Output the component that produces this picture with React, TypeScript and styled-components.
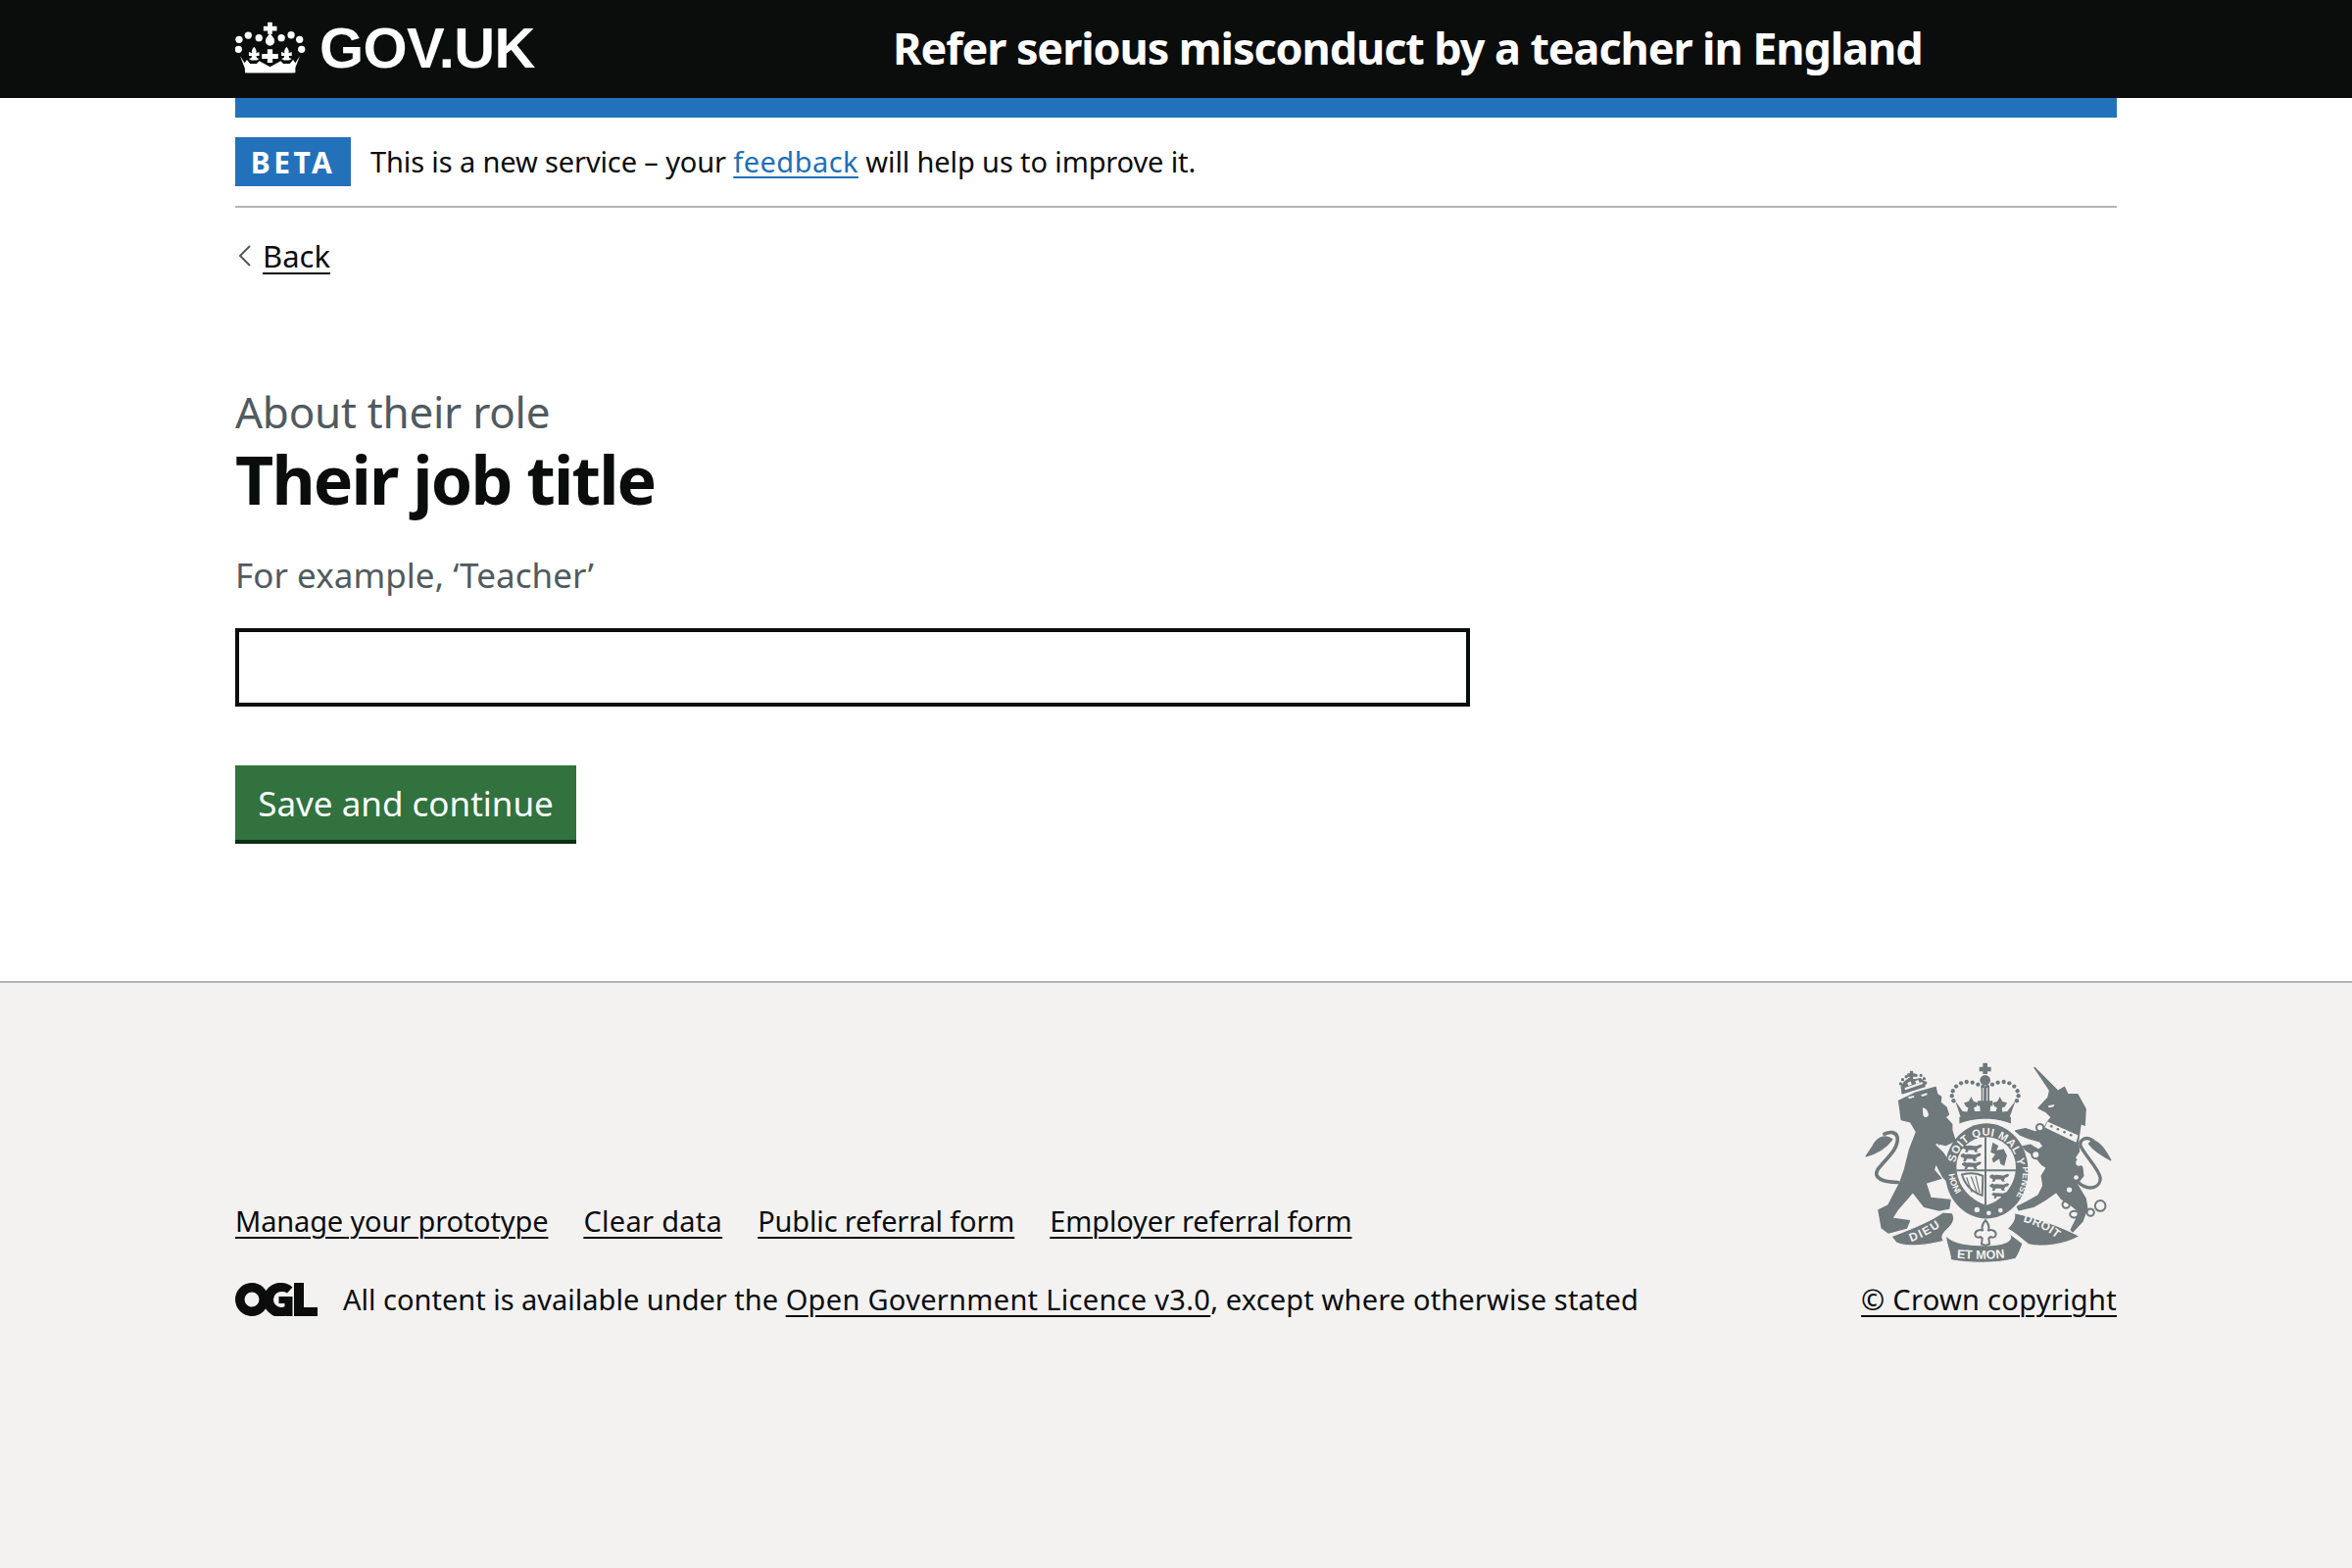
import React from "react";
import styled, { createGlobalStyle } from "styled-components";

const Global = createGlobalStyle`
  html, body { margin: 0; padding: 0; background: #fff; }
  body { font-family: "Noto Sans", "Open Sans", sans-serif; color: #0b0c0c; }
  * { box-sizing: border-box; }
`;

const Page = styled.div`
  min-height: 1600px;
  display: flex;
  flex-direction: column;
`;
const Header = styled.header`
  height: 100px;
  background: #0b0c0c;
  color: #fff;
  padding: 0 240px 3px;
  display: flex;
  align-items: center;
`;
const LogoBox = styled.div`
  width: 671px;
  display: flex;
  align-items: center;
  gap: 13px;
`;
const LogoText = styled.span`
  font-family: "Liberation Sans", Arial, sans-serif;
  font-weight: 700;
  font-size: 58px;
  letter-spacing: -0.6px;
  line-height: 94px;
`;
const ServiceName = styled.span`
  font-weight: 700;
  font-size: 45px;
  letter-spacing: -1.1px;
  white-space: nowrap;
`;
const Container = styled.div`
  margin: 0 240px;
`;
const BlueBar = styled.div`
  height: 20px;
  background: #2371bb;
`;
const Phase = styled.div`
  display: flex;
  align-items: center;
  gap: 20px;
  padding: 20px 0;
  border-bottom: 2px solid #b1b4b6;
`;
const Tag = styled.strong`
  width: 118px;
  height: 50px;
  background: #2371bb;
  color: #fff;
  font-size: 30px;
  font-weight: 700;
  letter-spacing: 3.4px;
  display: flex;
  align-items: center;
  justify-content: center;
`;
const Body = styled.span`
  font-size: 29px;
  line-height: 40px;
  letter-spacing: -0.12px;
`;
const InlineLink = styled.a`
  color: #1d70b8;
  letter-spacing: 0.45px;
  text-decoration: underline;
  text-decoration-thickness: 2px;
  text-underline-offset: 4px;
`;
const BackRow = styled.div`
  display: flex;
  align-items: center;
  gap: 12px;
  margin-top: 29px;
  padding-left: 3px;
  height: 40px;
  font-size: 31px;
`;
const BackLink = styled.a`
  color: #0b0c0c;
  text-decoration: underline;
  text-decoration-thickness: 2px;
  text-underline-offset: 5px;
`;
const Main = styled.main`
  padding-top: 115px;
  height: 720px;
  flex: none;
`;
const Caption = styled.div`
  color: #505a5f;
  font-size: 44px;
  line-height: 48px;
  letter-spacing: -0.25px;
`;
const Title = styled.h1`
  margin: 5px 0 0;
  font-size: 68px;
  font-weight: 700;
  line-height: 80px;
  letter-spacing: -1.85px;
`;
const Hint = styled.div`
  color: #505a5f;
  font-size: 35px;
  line-height: 40px;
  letter-spacing: 0.05px;
  margin-top: 38px;
`;
const Input = styled.input`
  display: block;
  width: 1260px;
  height: 80px;
  margin-top: 34px;
  border: 4px solid #0b0c0c;
  border-radius: 0;
  background: #fff;
  outline: none;
`;
const Button = styled.button`
  display: block;
  width: 348px;
  height: 76px;
  margin-top: 60px;
  border: 0;
  border-radius: 0;
  background: #31723f;
  box-shadow: 0 4px 0 #0f2d16;
  color: #fff;
  font-family: inherit;
  font-size: 35px;
  padding: 0;
`;
const Footer = styled.footer`
  flex: 1;
  background: #f3f2f1;
  border-top: 2px solid #b1b4b6;
  padding: 77px 240px 0;
  display: flex;
  justify-content: space-between;
  align-items: flex-start;
`;
const FooterLeft = styled.div`
  padding-top: 146px;
`;
const FooterLinks = styled.div`
  display: flex;
  gap: 36px;
  font-size: 29px;
  line-height: 40px;
`;
const FooterLink = styled.a<{ $track?: number }>`
  color: #0b0c0c;
  white-space: nowrap;
  letter-spacing: ${(p) => p.$track ?? -0.15}px;
  text-decoration: underline;
  text-decoration-thickness: 2px;
  text-underline-offset: 5px;
`;
const Licence = styled.div`
  display: flex;
  align-items: center;
  gap: 26px;
  margin-top: 40px;
  font-size: 29px;
  line-height: 40px;
  white-space: nowrap;
`;
const LicenceTail = styled.span`
  letter-spacing: 0.16px;
`;
const FooterRight = styled.div`
  display: flex;
  flex-direction: column;
  align-items: flex-end;
  gap: 13px;
  font-size: 29px;
  line-height: 40px;
`;

const Crown = () => (
  <svg width="73" height="55" viewBox="60 60 220 165" fill="#fff" aria-hidden="true">
    <circle cx="72" cy="118" r="11" />
    <circle cx="100" cy="105" r="11" />
    <circle cx="133" cy="113" r="11" />
    <circle cx="202" cy="113" r="11" />
    <circle cx="232" cy="104" r="11" />
    <circle cx="258" cy="118" r="11" />
    <circle cx="70" cy="148" r="11" />
    <circle cx="264" cy="148" r="11" />
    <path d="M160 65h14v12h14v14h-14v10h-14V91h-13V77h13z" />
    <path d="M167 99c8 10 14 16 14 24a14 14 0 0 1-28 0c0-8 6-14 14-24z" />
    <path d="M118 140c6 8 9 13 6 20l10 -4v12h-9l1 6 8 3-8 5h-16l-8-5 8-3 1-6h-9v-12l10 4c-3-7 0-12 6-20z" />
    <path d="M218 140c6 8 9 13 6 20l10-4v12h-9l1 6 8 3-8 5h-16l-8-5 8-3 1-6h-9v-12l10 4c-3-7 0-12 6-20z" />
    <path d="M159 148h16v14h17v15h-17v12h-16v-12h-17v-15h17z" />
    <path d="M75 168l14 22 7-10 10 12h20l8-8 33 18 33-18 8 8h20l10-12 7 10 14-22-20 52H95z" />
    <path d="M90 205h155v15H90z" />
  </svg>
);

const Ogl = () => (
  <svg width="84" height="34" viewBox="0 0 84 34" fill="#0b0c0c" aria-hidden="true">
    <path fillRule="evenodd" d="M17 0a17 17 0 1 1 0 34a17 17 0 0 1 0-34zm0 9.5a7.500 7.500 0 1 0 0 15a7.500 7.500 0 0 0 0-15z" />
    <path d="M47 0c4.500 0 8.500 1.500 11.500 4.500L53 10.500c-1.600-1.200-3.500-1.500-5.500-1.500a8 8 0 0 0-1 16c2 0 3.200-.4 4-1v-3h-6v-7h14v21h-7v-1.500c-2 1-4 1.500-6 1.500A17 17 0 0 1 47 0z" />
    <path d="M60 0h10v25h14v9H60z" />
  </svg>
);

const G = "#6f787b";
const BG = "#f3f2f1";

const arcDots: [number, number][] = [
  [340, 190], [335, 175], [338, 160], [348, 146], [363, 136], [380, 132], [398, 134], [415, 140], [430, 147],
];
const lionCrownDots: [number, number][] = [
  [178, 138], [184, 125], [195, 116], [210, 116], [225, 112], [240, 112], [250, 122], [254, 135],
];

const Guardant = ({ x, y, s = 1 }: { x: number; y: number; s?: number }) => (
  <path
    transform={`translate(${x} ${y}) scale(${s})`}
    fill={G}
    d="M0 5l8-5 6 3 6-1 22 2 12-5 6 3-4 6-8 3-5 7 5 4-10 1-4-7-16 0-3 7H7l3-8-6-3-4-2z"
  />
);

const Crest = () => (
  <svg width="260" height="213" viewBox="60 60 780 640" aria-hidden="true">
    <defs>
      <path id="garterTop" d="M345 392 A95 95 0 0 1 535 392" />
      <path id="garterLeft" d="M325 415 C 330 450 345 478 368 500" />
      <path id="garterRight" d="M552 392 C 556 440 540 480 510 512" />
      <path id="ribLeft" d="M210 622 C 245 610 280 592 318 562" />
      <path id="ribMid" d="M350 672 C 400 677 470 677 528 666" />
      <path id="ribRight" d="M553 561 C 590 570 635 590 668 622" />
    </defs>

    {/* lion */}
    <g fill={G} stroke={G} strokeWidth="4" strokeLinejoin="round">
      <path d="M172 190 L225 165 L285 148 L290 170 L302 178 L300 195 L318 210 L325 232 L315 240 L335 262 L335 280 L345 312 L316 326 L290 320 L330 385 L347 420 L332 446 L308 424 L286 382 L280 402 L302 428 L255 442 L270 488 L330 494 L326 520 L296 526 L250 515 L215 470 L205 482 L170 522 L152 550 L205 558 L196 580 L140 595 L120 580 L110 525 L140 510 L176 440 L190 400 L205 340 L226 285 L208 255 L180 248 L176 216 Z" />
      <path d="M72 360 C100 352 132 336 152 308 C128 290 104 305 92 330 Z" />
      <path d="M183 168 L252 146 L250 132 L238 122 L222 126 L204 122 L190 132 L180 146 Z" />
      <path d="M200 108h8v-8h6v8h7v6h-7v8h-6v-8h-8z" />
      {lionCrownDots.map(([x, y]) => (
        <circle key={`l${x}${y}`} cx={x} cy={y} r="3" />
      ))}
    </g>
    <g fill="none" stroke={G} strokeWidth="11" strokeLinecap="round">
      <path d="M170 440 C120 440 92 425 108 400 C132 368 172 340 168 302 C164 284 144 284 128 292" />
    </g>
    <g fill={BG}>
      <path d="M190 150 L244 132 L246 138 L192 157 Z" />
      <path d="M198 136l10-6 4 10-10 4zM222 130l10-4 4 8-10 4z" />
      <path d="M200 178l18-4 2 5-16 5zM240 172l18-6 2 5-16 6z" />
      <path d="M245 212c10 0 16 8 18 18a8 8 0 0 1-16 4z" />
      <path d="M288 320l52 46-6 6-48-46z" />
    </g>

    {/* unicorn */}
    <g fill={G} stroke={G} strokeWidth="4" strokeLinejoin="round">
      <path d="M635 158 L588 88 L660 160 L680 148 L690 170 L720 170 L745 215 L742 265 L730 260 L722 315 L725 345 L712 365 L735 395 L738 420 L718 445 L745 490 L750 520 L735 560 L705 592 L700 585 L715 555 L725 530 L700 510 L670 490 L655 470 L620 495 L585 515 L540 525 L535 515 L565 500 L600 480 L615 450 L610 420 L625 395 L610 385 L590 360 L560 340 L552 330 L575 325 L600 340 L615 330 L605 315 L570 305 L545 295 L530 282 L560 275 L590 285 L615 280 L628 255 L640 240 L625 225 L600 212 L630 180 Z" />
      <path d="M755 322 C770 296 800 330 822 372 C795 358 772 345 755 322 Z" />
    </g>
    <g fill="none" stroke={G} strokeWidth="10" strokeLinecap="round">
      <path d="M722 440 C760 472 792 452 790 426 C786 400 745 360 730 330 C724 310 745 296 768 312" />
    </g>
    <g fill={BG}>
      <path d="M628 254 L722 296 L716 318 L620 272 Z" />
      <circle cx="605" cy="272" r="11" />
      <circle cx="592" cy="355" r="12" />
      <circle cx="725" cy="380" r="10" />
      <circle cx="716" cy="425" r="7" />
      <circle cx="695" cy="463" r="8" />
      <path d="M630 205l20-4-4 8-14 2z" />
    </g>
    <g fill={G}>
      <circle cx="640" cy="268" r="4" />
      <circle cx="660" cy="277" r="4" />
      <circle cx="680" cy="286" r="4" />
      <circle cx="700" cy="295" r="4" />
    </g>
    <g fill="none" stroke={G} strokeWidth="6">
      <circle cx="605" cy="272" r="11" />
      <circle cx="592" cy="355" r="12" />
      <circle cx="685" cy="508" r="11" />
      <ellipse cx="710" cy="538" rx="13" ry="10" />
      <circle cx="760" cy="532" r="11" />
      <circle cx="790" cy="512" r="16" />
    </g>

    {/* royal crown */}
    <g fill={G}>
      <path d="M430 86v-12h14v12h11v14h-11v8h-14v-8h-11v-14z" />
      <circle cx="437" cy="127" r="16" />
      <path d="M425 146h25v46l-4 12h-17l-4-12z" />
      <path d="M345 190 L362 240 C400 226 475 226 512 240 L530 190 L505 222 L490 224 L482 178 L470 222 L452 222 L454 200 L437 178 L420 200 L422 222 L405 222 L394 178 L382 224 L368 222 Z" />
      <path d="M428 178h18v12h14v16h-14v20h-18v-20h-14v-16h14z" />
      <path d="M394 178l8 14 14 4-6 12-10 4v14h-12v-14l-10-4-6-12 14-4z" />
      <path d="M482 178l8 14 14 4-6 12-10 4v14h-12v-14l-10-4-6-12 14-4z" />
      <path d="M358 240 C400 222 475 222 516 240 L516 260 C475 242 400 242 358 260 Z" />
      {arcDots.map(([x, y]) => (
        <circle key={`a${x}`} cx={x} cy={y} r="6.500" />
      ))}
      {arcDots.map(([x, y]) => (
        <circle key={`b${x}`} cx={874 - x} cy={y} r="6.500" />
      ))}
    </g>
    <path d="M431 150v40M443 150v40" stroke={BG} strokeWidth="3" />

    {/* garter and shield */}
    <ellipse cx="441" cy="405" rx="128" ry="146" fill={G} />
    <path d="M362 262 C405 240 475 240 516 262 L512 272 C475 254 405 254 368 272 Z" fill={BG} />
    <path d="M349 392 A91 91 0 0 1 531 392 C531 450 490 495 441 510 C392 495 349 450 349 392 Z" fill={BG} />
    <path d="M349 403h182M438 301v209" stroke={G} strokeWidth="6" />
    <Guardant x={368} y={325} s={1} />
    <Guardant x={362} y={351} s={1.05} />
    <Guardant x={366} y={377} s={1} />
    <Guardant x={451} y={415} s={1} />
    <Guardant x={451} y={443} s={1} />
    <Guardant x={458} y={471} s={.8} />
    <path d="M460 318 l18 10 -6 14 22 -4 10 20 -8 32 -12-6 -4-16 -18 12 -4-12 10-14 -14-6 z" fill={G} />
    <path d="M366 416 C390 410 415 412 430 420 L428 480 C398 470 376 450 366 416 Z" fill="none" stroke={G} strokeWidth="6" />
    <path d="M380 425l16 45M394 422l18 50M408 420l12 52" stroke={G} strokeWidth="3.500" />
    <g fill={BG}>
      <circle cx="412" cy="524" r="8" />
      <circle cx="448" cy="534" r="7" />
      <circle cx="484" cy="526" r="7" />
    </g>

    {/* ribbons */}
    <g fill={G} stroke={BG} strokeWidth="3">
      <path d="M150 606 C205 585 270 560 308 532 L336 534 C346 552 340 566 318 586 C300 604 305 612 310 620 C270 630 200 642 165 625 Z" />
      <path d="M527 534 C590 548 670 575 726 605 C680 632 610 640 570 630 C545 610 530 596 506 582 C522 566 530 552 527 534 Z" />
      <path d="M316 604 C340 625 365 632 440 634 C510 632 525 615 510 596 L552 628 C545 645 540 660 530 674 C470 690 390 688 332 678 C330 650 318 630 316 604 Z" />
    </g>
    <path d="M438 556c9 10 13 22 8 33 8-6 24-2 24 10 0 9-10 12-16 8l-6 4 2 18-12 5-12-5 2-18-6-4c-6 4-16 1-16-8 0-12 16-16 24-10-5-11-1-23 8-33z" fill={BG} stroke={G} strokeWidth="6" />

    <g fill={BG} fontFamily="Liberation Sans, Arial, sans-serif" fontWeight="700">
      <text fontSize="34" letterSpacing="1.500"><textPath href="#garterTop" startOffset="12">SOIT QUI MAL Y</textPath></text>
      <text fontSize="27"><textPath href="#garterLeft">HONI</textPath></text>
      <text fontSize="27" letterSpacing="1"><textPath href="#garterRight">PENSE</textPath></text>
      <text fontSize="36" letterSpacing="5"><textPath href="#ribLeft">DIEU</textPath></text>
      <text fontSize="38"><textPath href="#ribMid">ET MON</textPath></text>
      <text fontSize="36" letterSpacing="1"><textPath href="#ribRight">DROIT</textPath></text>
    </g>
  </svg>
);

const Chevron = () => (
  <svg width="13" height="22" viewBox="0 0 13 22" fill="none" stroke="#505a5f" strokeWidth="2" aria-hidden="true">
    <path d="M12 1L2 11l10 10" />
  </svg>
);

export default function App() {
  return (
    <Page>
      <Global />
      <Header>
        <LogoBox>
          <Crown />
          <LogoText>GOV.UK</LogoText>
        </LogoBox>
        <ServiceName>Refer serious misconduct by a teacher in England</ServiceName>
      </Header>
      <Container>
        <BlueBar />
        <Phase>
          <Tag>BETA</Tag>
          <Body>
            This is a new service – your <InlineLink href="#">feedback</InlineLink> will help us to improve it.
          </Body>
        </Phase>
        <BackRow>
          <Chevron />
          <BackLink href="#">Back</BackLink>
        </BackRow>
        <Main>
          <Caption>About their role</Caption>
          <Title>Their job title</Title>
          <Hint>For example, ‘Teacher’</Hint>
          <Input type="text" />
          <Button>Save and continue</Button>
        </Main>
      </Container>
      <Footer>
        <FooterLeft>
          <FooterLinks>
            <FooterLink href="#">Manage your prototype</FooterLink>
            <FooterLink href="#" $track={0.3}>Clear data</FooterLink>
            <FooterLink href="#">Public referral form</FooterLink>
            <FooterLink href="#">Employer referral form</FooterLink>
          </FooterLinks>
          <Licence>
            <Ogl />
            <span>
              All content is available under the <FooterLink href="#" $track={0.3}>Open Government Licence v3.0</FooterLink>
              <LicenceTail>, except where otherwise stated</LicenceTail>
            </span>
          </Licence>
        </FooterLeft>
        <FooterRight>
          <Crest />
          <FooterLink href="#" $track={0.3}>© Crown copyright</FooterLink>
        </FooterRight>
      </Footer>
    </Page>
  );
}
